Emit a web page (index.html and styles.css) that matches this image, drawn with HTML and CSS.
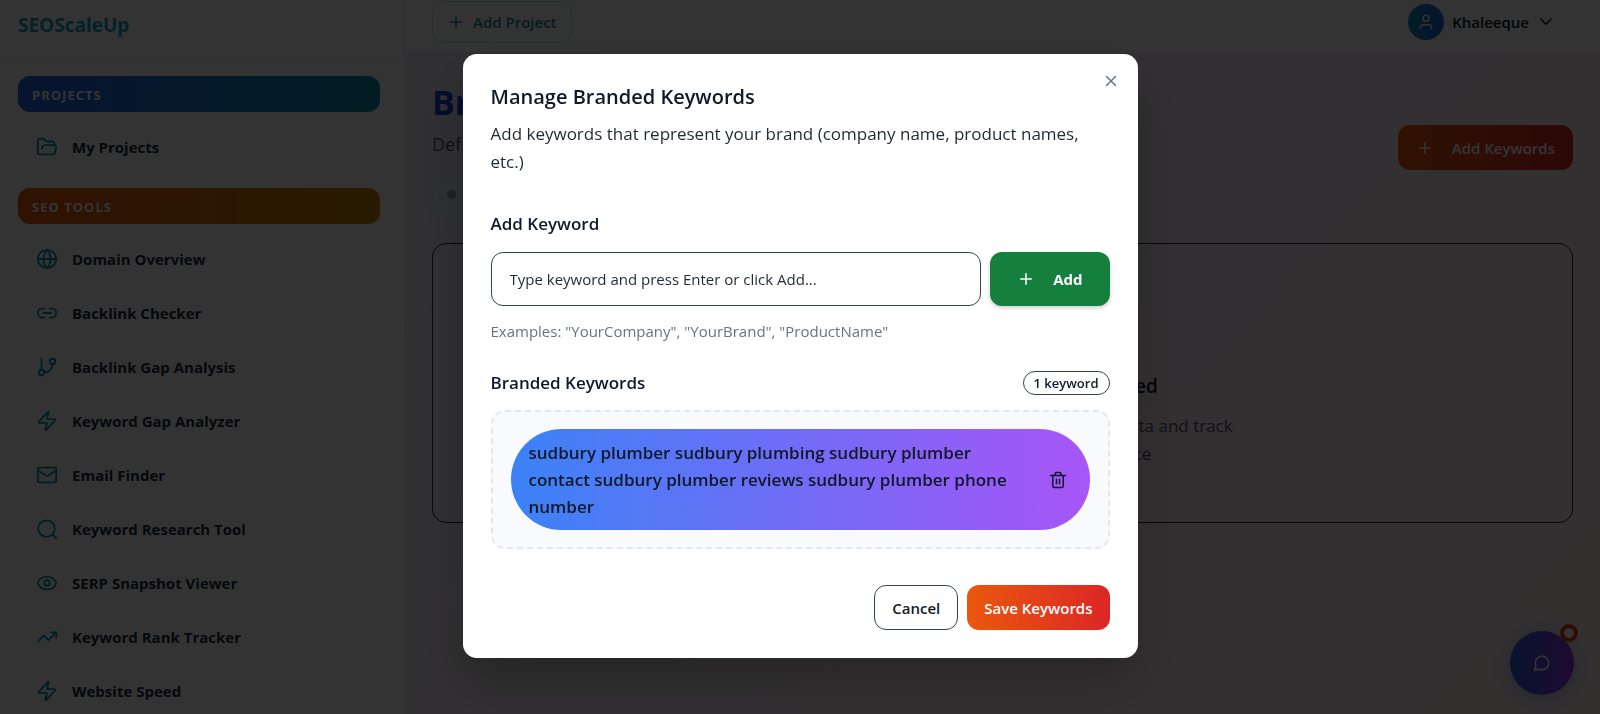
FILE: index.html
```html
<!DOCTYPE html>
<html lang="en">
<head>
<meta charset="utf-8">
<meta name="viewport" content="width=device-width, initial-scale=1">
<title>SEOScaleUp - Branded Keywords</title>
<link rel="stylesheet" href="styles.css">
</head>
<body>
<div class="app">
  <aside class="sidebar">
    <div class="logo">SEOScaleUp</div>
    <nav class="menu">
      <h2 class="menu-title projects">PROJECTS</h2>
      <a class="menu-item" href="#"><svg class="icon" viewBox="0 0 24 24"><path d="m6 14 1.5-2.9A2 2 0 0 1 9.240 10H20a2 2 0 0 1 1.940 2.500l-1.540 6a2 2 0 0 1-1.950 1.500H4a2 2 0 0 1-2-2V5a2 2 0 0 1 2-2h3.900a2 2 0 0 1 1.690.900l.810 1.200a2 2 0 0 0 1.670.900H18a2 2 0 0 1 2 2v2"/></svg>My Projects</a>
      <h2 class="menu-title tools">SEO TOOLS</h2>
      <a class="menu-item" href="#"><svg class="icon" viewBox="0 0 24 24"><circle cx="12" cy="12" r="10"/><path d="M12 2a14.500 14.500 0 0 0 0 20 14.500 14.500 0 0 0 0-20M2 12h20"/></svg>Domain Overview</a>
      <a class="menu-item" href="#"><svg class="icon" viewBox="0 0 24 24"><path d="M9 17H7A5 5 0 0 1 7 7h2M15 7h2a5 5 0 1 1 0 10h-2M8 12h8"/></svg>Backlink Checker</a>
      <a class="menu-item" href="#"><svg class="icon" viewBox="0 0 24 24"><path d="M6 3v12"/><circle cx="18" cy="6" r="3"/><circle cx="6" cy="18" r="3"/><path d="M18 9a9 9 0 0 1-9 9"/></svg>Backlink Gap Analysis</a>
      <a class="menu-item" href="#"><svg class="icon" viewBox="0 0 24 24"><path d="M4 14a1 1 0 0 1-.780-1.630l9.900-10.200a.5.5 0 0 1 .860.460l-1.920 6.020A1 1 0 0 0 13 10h7a1 1 0 0 1 .780 1.630l-9.900 10.200a.5.5 0 0 1-.860-.460l1.920-6.020A1 1 0 0 0 11 14z"/></svg>Keyword Gap Analyzer</a>
      <a class="menu-item" href="#"><svg class="icon" viewBox="0 0 24 24"><rect x="2" y="4" width="20" height="16" rx="2"/><path d="m22 7-8.970 5.700a1.940 1.940 0 0 1-2.060 0L2 7"/></svg>Email Finder</a>
      <a class="menu-item" href="#"><svg class="icon" viewBox="0 0 24 24"><circle cx="11.500" cy="11.500" r="9"/><path d="m22 22-4-4"/></svg>Keyword Research Tool</a>
      <a class="menu-item" href="#"><svg class="icon" viewBox="0 0 24 24"><path d="M2.060 12.350a1 1 0 0 1 0-.700 10.750 10.750 0 0 1 19.880 0 1 1 0 0 1 0 .700 10.750 10.750 0 0 1-19.880 0"/><circle cx="12" cy="12" r="3"/></svg>SERP Snapshot Viewer</a>
      <a class="menu-item" href="#"><svg class="icon" viewBox="0 0 24 24"><path d="m22 7-8.500 8.500-5-5L2 17"/><path d="M16 7h6v6"/></svg>Keyword Rank Tracker</a>
      <a class="menu-item" href="#"><svg class="icon" viewBox="0 0 24 24"><path d="M4 14a1 1 0 0 1-.780-1.630l9.900-10.200a.5.5 0 0 1 .860.460l-1.920 6.020A1 1 0 0 0 13 10h7a1 1 0 0 1 .780 1.630l-9.900 10.200a.5.5 0 0 1-.860-.460l1.920-6.020A1 1 0 0 0 11 14z"/></svg>Website Speed</a>
    </nav>
  </aside>

  <div class="page">
    <header class="topbar">
      <button class="add-project" type="button"><svg class="icon icon-md" viewBox="0 0 24 24"><path d="M5 12h14M12 5v14"/></svg>Add Project</button>
      <button class="account" type="button">
        <span class="avatar"><svg class="icon icon-md" viewBox="0 0 24 24"><circle cx="12" cy="7" r="4"/><path d="M4.500 21v-1.500a4 4 0 0 1 4-4h7a4 4 0 0 1 4 4V21"/></svg></span>
        Khaleeque
        <svg class="icon icon-md" viewBox="0 0 24 24"><path d="m5 8 7 7 7-7"/></svg>
      </button>
    </header>

    <main class="content">
      <div class="page-head">
        <div>
          <h1>Branded Keywords</h1>
          <p class="subtitle">Define your brand terms</p>
          <span class="status"><i class="dot"></i>Not set</span>
        </div>
        <button class="btn btn-fire btn-add-keywords" type="button"><svg class="icon icon-md" viewBox="0 0 24 24"><path d="M5 12h14M12 5v14"/></svg>Add Keywords</button>
      </div>
      <section class="empty">
        <svg class="icon icon-lg" viewBox="0 0 24 24"><circle cx="12" cy="12" r="10"/><circle cx="12" cy="12" r="4"/></svg>
        <h3>No Branded Keywords Configured</h3>
        <p>Add branded keywords to view your search data and track<br>your brand visibility and performance</p>
      </section>
    </main>
  </div>
</div>

<button class="chat" type="button" aria-label="Chat">
  <svg class="icon icon-md" viewBox="0 0 24 24"><path d="M7.900 20A9 9 0 1 0 4 16.100L2 22Z"/></svg>
  <span class="chat-badge"></span>
</button>

<div class="overlay">
  <div class="modal" role="dialog" aria-modal="true" aria-labelledby="modal-title">
    <button class="close" type="button" aria-label="Close"><svg class="icon icon-md" viewBox="0 0 24 24"><path d="M18 6 6 18M6 6l12 12"/></svg></button>
    <h2 class="modal-title" id="modal-title">Manage Branded Keywords</h2>
    <p class="modal-text">Add keywords that represent your brand (company name, product names, etc.)</p>

    <label class="label" for="keyword">Add Keyword</label>
    <div class="add-row">
      <input class="field" id="keyword" type="text" placeholder="Type keyword and press Enter or click Add...">
      <button class="btn btn-add" type="button"><svg class="icon icon-md" viewBox="0 0 24 24"><path d="M5 12h14M12 5v14"/></svg>Add</button>
    </div>
    <p class="hint">Examples: "YourCompany", "YourBrand", "ProductName"</p>

    <div class="list-head">
      <h3 class="label">Branded Keywords</h3>
      <span class="count">1 keyword</span>
    </div>
    <div class="list">
      <div class="keyword">
        <span>sudbury plumber sudbury plumbing sudbury plumber contact sudbury plumber reviews sudbury plumber phone number</span>
        <button class="remove" type="button" aria-label="Remove keyword"><svg class="icon icon-md" viewBox="0 0 24 24"><path d="M2 6h20M19 6v14a2 2 0 0 1-2 2H7a2 2 0 0 1-2-2V6M8 6V4a2 2 0 0 1 2-2h4a2 2 0 0 1 2 2v2M10 11v6M14 11v6"/></svg></button>
      </div>
    </div>

    <div class="modal-foot">
      <button class="btn btn-outline" type="button">Cancel</button>
      <button class="btn btn-fire" type="button">Save Keywords</button>
    </div>
  </div>
</div>
</body>
</html>
```
FILE: styles.css
```css
*{
  box-sizing:border-box;
  margin:0;
  padding:0;
}
body{
  height:100vh;
  overflow:hidden;
  font-family:"Open Sans","Noto Sans",sans-serif;
  font-size:17px;
  line-height:28px;
  color:#111827;
}
button,input{
  font:inherit;
  color:inherit;
}
button{
  border:none;
  background:none;
  cursor:pointer;
}
.icon{
  width:22px;
  height:22px;
  flex:none;
  fill:none;
  stroke:currentColor;
  stroke-width:2;
  stroke-linecap:round;
  stroke-linejoin:round;
}
.icon-md{
  width:18px;
  height:18px;
}
.icon-lg{
  width:56px;
  height:56px;
}
.app{
  display:flex;
  height:100%;
}

/* sidebar */
.sidebar{
  flex:none;
  width:405px;
  overflow:hidden;
  background:#fff;
  border-right:1px solid #e5e7eb;
}
.logo{
  height:58px;
  padding:11px 18px;
  border-bottom:1px solid #f3f4f6;
  font-size:19px;
  font-weight:700;
  color:#0aa5c6;
}
.menu{
  display:flex;
  flex-direction:column;
  gap:4px;
  padding:18px 24px 18px 18px;
}
.menu-title{
  height:36px;
  margin-bottom:6px;
  padding:1px 14px 0;
  border-radius:12px;
  font-size:13px;
  line-height:36px;
  font-weight:700;
  letter-spacing:1px;
  color:#fff;
}
.projects{
  background:linear-gradient(to right,#2563eb,#0891b2);
}
.tools{
  margin-top:12px;
  background:linear-gradient(to right,#ea580c,#ca8a04);
}
.menu-item{
  display:flex;
  align-items:center;
  gap:14px;
  height:50px;
  padding:0 18px;
  font-size:15px;
  font-weight:700;
  color:#1f2937;
  text-decoration:none;
}
.menu-item .icon{
  color:#0891b2;
}

/* page */
.page{
  flex:1;
  min-width:0;
  display:flex;
  flex-direction:column;
}
.topbar{
  display:flex;
  align-items:center;
  justify-content:space-between;
  padding:1px 27px 9px;
  background:#fff;
}
.add-project{
  display:flex;
  align-items:center;
  gap:8px;
  height:42px;
  padding:0 14px;
  border:1px solid #a5e3f0;
  border-radius:12px;
  font-size:15px;
  font-weight:600;
  color:#0891b2;
}
.account{
  display:flex;
  align-items:center;
  gap:8px;
  padding-right:18px;
  font-size:15px;
  font-weight:600;
}
.avatar{
  display:flex;
  align-items:center;
  justify-content:center;
  width:36px;
  height:36px;
  border-radius:50%;
  background:linear-gradient(to right,#0891b2,#2563eb);
  color:#fff;
}
.content{
  flex:1;
  padding:30px 27px;
  background:linear-gradient(135deg,#eef0ff,#faf0f8 50%,#fff0f0);
}
.page-head{
  display:flex;
  align-items:center;
  justify-content:space-between;
  margin-bottom:30px;
}
h1{
  font-size:34px;
  line-height:40px;
  color:#1e40e0;
}
.subtitle{
  margin:8px 0 18px;
  font-size:18px;
  color:#4b5563;
}
.status{
  display:inline-flex;
  align-items:center;
  gap:9px;
  height:37px;
  padding:0 14px;
  border:1px solid #d5eaf5;
  border-radius:12px;
  background:#e6f1f8;
  vertical-align:top;
}
.dot{
  width:9px;
  height:9px;
  border-radius:50%;
  background:#9ca3af;
}
.btn{
  display:flex;
  align-items:center;
  justify-content:center;
  height:45px;
  padding:0 18px;
  border-radius:12px;
  font-size:15px;
  font-weight:600;
  white-space:nowrap;
}
.btn-fire{
  background:linear-gradient(to right,#ea580c,#dc2626);
  color:#fff;
}
.btn-add-keywords{
  gap:18px;
}
.empty{
  display:flex;
  flex-direction:column;
  align-items:center;
  padding:54px 27px;
  border:1px solid #1f2937;
  border-radius:14px;
  text-align:center;
  color:#4b5563;
}
.empty h3{
  margin:18px 0 12px;
  font-size:19px;
  font-weight:600;
  color:#111827;
}

/* chat bubble */
.chat{
  position:fixed;
  right:26px;
  bottom:19px;
  display:flex;
  align-items:center;
  justify-content:center;
  width:64px;
  height:64px;
  border-radius:50%;
  background:linear-gradient(to right,#2563eb,#9333ea);
  box-shadow:0 4px 24px rgba(37,99,235,.4);
  color:#fff;
}
.chat-badge{
  position:absolute;
  top:-7px;
  right:-4px;
  width:18px;
  height:18px;
  border:4px solid #ea3a0c;
  border-radius:50%;
  background:#fff;
}

/* modal */
.overlay{
  position:fixed;
  inset:0;
  display:flex;
  align-items:center;
  justify-content:center;
  padding-bottom:2px;
  background:rgba(0,0,0,.8);
}
.modal{
  position:relative;
  width:675px;
  padding:28px;
  border-radius:14px;
  background:#fff;
  box-shadow:0 25px 50px rgba(0,0,0,.25);
}
.close{
  position:absolute;
  top:18px;
  right:18px;
  display:flex;
  color:#6b7280;
}
.modal-title{
  margin-bottom:8px;
  font-size:20px;
  line-height:30px;
  font-weight:600;
}
.modal-text{
  margin-bottom:34px;
  color:#1f2937;
}
.label{
  display:block;
  font-size:17px;
  font-weight:600;
}
.add-row{
  display:flex;
  gap:9px;
  margin:14px 0 13px;
}
.field{
  flex:1;
  min-width:0;
  height:54px;
  padding:0 18px;
  border:1px solid #374151;
  border-radius:12px;
  background:#fff;
  font-size:15px;
}
.field::placeholder{
  color:#1f2937;
  opacity:1;
}
.btn-add{
  gap:18px;
  height:54px;
  padding:0 27px;
  background:#15803d;
  box-shadow:0 2px 4px rgba(0,0,0,.2);
  font-weight:700;
  color:#fff;
}
.hint{
  font-size:15px;
  line-height:24px;
  color:#6b7280;
}
.list-head{
  display:flex;
  align-items:center;
  justify-content:space-between;
  margin:26px 0 13px;
}
.count{
  padding:0 10px;
  border:1px solid #374151;
  border-radius:12px;
  font-size:13px;
  line-height:22px;
  font-weight:600;
}
.list{
  padding:17px 18px;
  border:2px dashed #e5e7eb;
  border-radius:14px;
  background:#f9fafb;
}
.keyword{
  display:flex;
  align-items:center;
  justify-content:space-between;
  gap:18px;
  padding:10px 23px 10px 18px;
  border-radius:51px;
  background:linear-gradient(to right,#3b82f6,#a855f7);
  line-height:27px;
  font-weight:600;
}
.remove{
  display:flex;
}
.modal-foot{
  display:flex;
  justify-content:flex-end;
  gap:9px;
  margin-top:36px;
}
.modal-foot .btn{
  padding:0 17px;
}
.btn-outline{
  border:1px solid #374151;
  background:#fff;
}
```
